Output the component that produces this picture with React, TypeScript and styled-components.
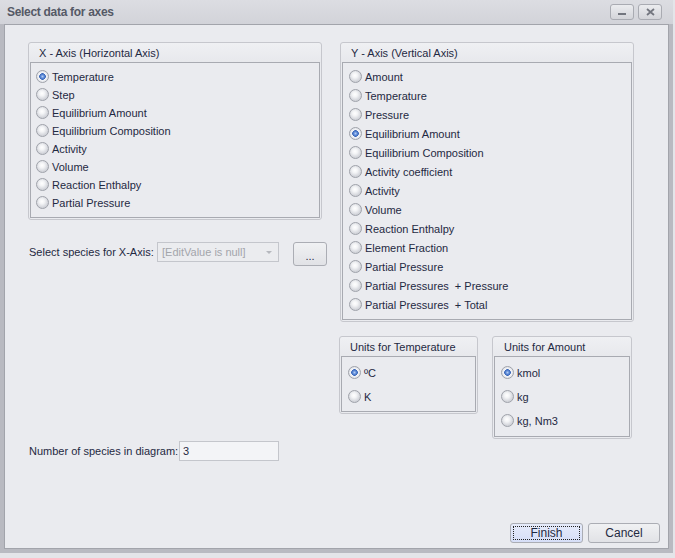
import styled, { createGlobalStyle } from "styled-components";

const GlobalStyle = createGlobalStyle`
  html, body {
    margin: 0;
    padding: 0;
    background: #e4e5e9;
    font-family: "Liberation Sans", Arial, sans-serif;
    font-size: 11px;
    color: #1f2942;
  }
  #root {
    width: 675px;
    height: 558px;
    overflow: hidden;
  }
`;

const SWindow = styled.div`
  width: 673px;
  height: 553px;
  box-sizing: border-box;
  background: #b9bac1;
  display: flex;
  flex-direction: column;
  padding: 0 4px 4px 4px;
`;

const STitleBar = styled.div`
  height: 24px;
  margin: 0 -4px;
  padding: 0 8px 0 7px;
  background: linear-gradient(#dcdde2, #d2d3d9);
  display: flex;
  align-items: center;
  justify-content: space-between;
`;

const STitle = styled.div`
  font-family: "Liberation Sans", sans-serif;
  font-size: 12px;
  font-weight: bold;
  color: #555966;
  letter-spacing: -0.3px;
`;

const SCaptionButtons = styled.div`
  display: flex;
  gap: 4px;
  margin-right: 3px;
`;

const SCaptionButton = styled.div`
  width: 24px;
  height: 16px;
  box-sizing: border-box;
  border: 1px solid #a9abb2;
  border-radius: 3px;
  background: linear-gradient(#ebecef, #d3d4d9);
  display: flex;
  align-items: center;
  justify-content: center;
`;

const SClient = styled.div`
  flex: 1;
  background: #eaebef;
  border: 1px solid #a2a4ab;
  display: flex;
  flex-direction: column;
  padding: 17px 8px 5px 23px;
`;

const SColumns = styled.div`
  display: flex;
  gap: 18px;
`;

const SColumn = styled.div`
  width: 294px;
  flex: none;
  display: flex;
  flex-direction: column;
`;

const SGroup = styled.div<{ $w?: number; $h: number }>`
  width: ${(p) => (p.$w ? `${p.$w}px` : "100%")};
  height: ${(p) => p.$h}px;
  flex: none;
  box-sizing: border-box;
  border: 1px solid #c6c7cd;
  border-radius: 3px;
  background: linear-gradient(#eff0f3, #e7e8ec 20px, #eaebef 20px);
  display: flex;
  flex-direction: column;
  padding: 0 1px 1px 1px;
`;

const SGroupHeader = styled.div<{ $indent?: number }>`
  height: 19px;
  display: flex;
  align-items: center;
  padding-left: ${(p) => p.$indent ?? 9}px;
  white-space: nowrap;
`;

const SGroupBody = styled.div<{ $gap: number; $top: number; $left: number }>`
  flex: 1;
  border: 1px solid #a8aab1;
  background: #eaebef;
  display: flex;
  flex-direction: column;
  gap: ${(p) => p.$gap}px;
  padding: ${(p) => p.$top}px 0 0 ${(p) => p.$left}px;
`;

const SRadioRow = styled.label`
  display: flex;
  align-items: center;
  gap: 3px;
  height: 13px;
  white-space: pre;
`;

const SRadio = styled.span<{ $checked?: boolean }>`
  width: 13px;
  height: 13px;
  box-sizing: border-box;
  border-radius: 50%;
  border: 1px solid #9fa2aa;
  background: ${(p) =>
    p.$checked
      ? "radial-gradient(circle at 50% 50%, #b3ccf3 0, #5a88d6 1.8px, #3a66b8 3px, #f4f5f8 3.6px, #e2e4e9 5.5px)"
      : "radial-gradient(circle at 45% 40%, #ffffff 0, #f3f4f6 2.5px, #d2d4da 6px)"};
  flex: none;
`;

const SFieldRow = styled.div<{ $top: number }>`
  display: flex;
  align-items: flex-start;
  margin-top: ${(p) => p.$top}px;
  white-space: nowrap;
`;

const SLabel = styled.span<{ $w: number }>`
  width: ${(p) => p.$w}px;
  line-height: 20px;
  padding-left: 1px;
  flex: none;
`;

const SCombo = styled.div`
  width: 122px;
  height: 20px;
  flex: none;
  box-sizing: border-box;
  border: 1px solid #c4c6cc;
  background: #ebecef;
  color: #a3a5ab;
  display: flex;
  align-items: center;
  justify-content: space-between;
  padding: 0 6px 0 4px;
`;

const SComboArrow = styled.span`
  width: 0;
  height: 0;
  border-left: 3px solid transparent;
  border-right: 3px solid transparent;
  border-top: 3px solid #b6b8be;
`;

const SButton = styled.div<{ $w: number; $h: number; $focus?: boolean }>`
  width: ${(p) => p.$w}px;
  height: ${(p) => p.$h}px;
  flex: none;
  box-sizing: border-box;
  border: 1px solid #abadb4;
  border-radius: 3px;
  background: ${(p) =>
    p.$focus
      ? "linear-gradient(#e6ebfa, #d6def7)"
      : "linear-gradient(#f0f1f3, #e1e2e6)"};
  display: flex;
  align-items: center;
  justify-content: center;
  position: relative;
  font-size: 12px;
  &::after {
    content: "";
    display: ${(p) => (p.$focus ? "block" : "none")};
    position: absolute;
    inset: 2px;
    border: 1px dotted #222;
  }
`;

const SEllipsisButton = styled(SButton)`
  margin-left: 14px;
  font-size: 11px;
  padding-top: 4px;
`;

const STextInput = styled.div`
  width: 100px;
  height: 20px;
  flex: none;
  box-sizing: border-box;
  border: 1px solid #c4c6cc;
  background: #f3f4f7;
  display: flex;
  align-items: center;
  padding-left: 3px;
`;

const SUnitsRow = styled.div`
  display: flex;
  gap: 14px;
  margin-top: 14px;
  margin-left: -1px;
  align-items: flex-start;
`;

const SFooter = styled.div`
  margin-top: auto;
  display: flex;
  justify-content: flex-end;
  gap: 5px;
`;

const xAxis = [
  "Temperature",
  "Step",
  "Equilibrium Amount",
  "Equilibrium Composition",
  "Activity",
  "Volume",
  "Reaction Enthalpy",
  "Partial Pressure",
];

const yAxis = [
  "Amount",
  "Temperature",
  "Pressure",
  "Equilibrium Amount",
  "Equilibrium Composition",
  "Activity coefficient",
  "Activity",
  "Volume",
  "Reaction Enthalpy",
  "Element Fraction",
  "Partial Pressure",
  "Partial Pressures  + Pressure",
  "Partial Pressures  + Total",
];

function RadioList({ items, checked }: { items: string[]; checked: string }) {
  return (
    <>
      {items.map((text) => (
        <SRadioRow key={text}>
          <SRadio $checked={text === checked} />
          {text}
        </SRadioRow>
      ))}
    </>
  );
}

export default function App() {
  return (
    <>
      <GlobalStyle />
      <SWindow>
        <STitleBar>
          <STitle>Select data for axes</STitle>
          <SCaptionButtons>
            <SCaptionButton>
              <svg width="8" height="8" viewBox="0 0 8 8">
                <rect x="0" y="5" width="8" height="2" fill="#73767f" />
              </svg>
            </SCaptionButton>
            <SCaptionButton>
              <svg width="9" height="8" viewBox="0 0 9 8">
                <path d="M1 1 L8 7 M8 1 L1 7" stroke="#73767f" strokeWidth="1.8" />
              </svg>
            </SCaptionButton>
          </SCaptionButtons>
        </STitleBar>
        <SClient>
          <SColumns>
            <SColumn>
              <SGroup $h={178}>
                <SGroupHeader>X - Axis (Horizontal Axis)</SGroupHeader>
                <SGroupBody $gap={5} $top={7} $left={5}>
                  <RadioList items={xAxis} checked="Temperature" />
                </SGroupBody>
              </SGroup>
              <SFieldRow $top={22}>
                <SLabel $w={128}>Select species for X-Axis:</SLabel>
                <SCombo>
                  <span>[EditValue is null]</span>
                  <SComboArrow />
                </SCombo>
                <SEllipsisButton $w={34} $h={24}>...</SEllipsisButton>
              </SFieldRow>
              <SFieldRow $top={175}>
                <SLabel $w={150}>Number of species in diagram:</SLabel>
                <STextInput>3</STextInput>
              </SFieldRow>
            </SColumn>
            <SColumn>
              <SGroup $h={280}>
                <SGroupHeader>Y - Axis (Vertical Axis)</SGroupHeader>
                <SGroupBody $gap={6} $top={7} $left={6}>
                  <RadioList items={yAxis} checked="Equilibrium Amount" />
                </SGroupBody>
              </SGroup>
              <SUnitsRow>
                <SGroup $w={139} $h={78}>
                  <SGroupHeader>Units for Temperature</SGroupHeader>
                  <SGroupBody $gap={11} $top={9} $left={6}>
                    <RadioList items={["ºC", "K"]} checked="ºC" />
                  </SGroupBody>
                </SGroup>
                <SGroup $w={140} $h={103}>
                  <SGroupHeader $indent={10}>Units for Amount</SGroupHeader>
                  <SGroupBody $gap={11} $top={9} $left={6}>
                    <RadioList items={["kmol", "kg", "kg, Nm3"]} checked="kmol" />
                  </SGroupBody>
                </SGroup>
              </SUnitsRow>
            </SColumn>
          </SColumns>
          <SFooter>
            <SButton $w={73} $h={20} $focus>
              Finish
            </SButton>
            <SButton $w={72} $h={20}>
              Cancel
            </SButton>
          </SFooter>
        </SClient>
      </SWindow>
    </>
  );
}
